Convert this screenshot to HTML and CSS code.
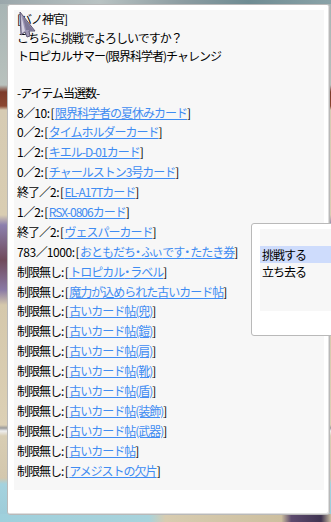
FILE: index.html
```html
<!DOCTYPE html>
<html lang="ja">
<head>
  <meta charset="UTF-8" />
  <meta name="viewport" content="width=device-width, initial-scale=1.0" />
  <title>バノ神官</title>
  <link rel="stylesheet" href="styles.css">
</head>
<body>
  <div class="scene">
    <div class="dialog">
      <div class="panel">
        <p class="line">[バノ神官]</p>
        <p class="line">こちらに挑戦でよろしいですか？</p>
        <p class="line">トロピカルサマー(限界科学者)チャレンジ</p>
        <p class="line">&nbsp;</p>
        <p class="line">-アイテム当選数-</p>
        <p class="line item"><span class="num">8</span>／<span class="num">10</span><span class="sep">:[</span><a href="#">限界科学者の夏休みカード</a>]</p>
        <p class="line item"><span class="num">0</span>／<span class="num">2</span><span class="sep">:[</span><a href="#">タイムホルダーカード</a>]</p>
        <p class="line item"><span class="num">1</span>／<span class="num">2</span><span class="sep">:[</span><a href="#">キエル-D-01カード</a>]</p>
        <p class="line item"><span class="num">0</span>／<span class="num">2</span><span class="sep">:[</span><a href="#">チャールストン3号カード</a>]</p>
        <p class="line item">終了／<span class="num">2</span><span class="sep">:[</span><a href="#">EL-A17Tカード</a>]</p>
        <p class="line item"><span class="num">1</span>／<span class="num">2</span><span class="sep">:[</span><a href="#">RSX-0806カード</a>]</p>
        <p class="line item">終了／<span class="num">2</span><span class="sep">:[</span><a href="#">ヴェスパーカード</a>]</p>
        <p class="line item"><span class="num">783</span>／<span class="num">1000</span><span class="sep">:[</span><a href="#">おともだち<span class="dot">・</span>ふ<span class="small">ぃ</span>です<span class="dot">・</span>たたき券</a>]</p>
        <p class="line item">制限無し<span class="sep">:[</span><a href="#">トロピカル<span class="dot">・</span>ラベル</a>]</p>
        <p class="line item">制限無し<span class="sep">:[</span><a href="#">魔力が込められた古いカード帖</a>]</p>
        <p class="line item">制限無し<span class="sep">:[</span><a href="#">古いカード帖(兜)</a>]</p>
        <p class="line item">制限無し<span class="sep">:[</span><a href="#">古いカード帖(鎧)</a>]</p>
        <p class="line item">制限無し<span class="sep">:[</span><a href="#">古いカード帖(肩)</a>]</p>
        <p class="line item">制限無し<span class="sep">:[</span><a href="#">古いカード帖(靴)</a>]</p>
        <p class="line item">制限無し<span class="sep">:[</span><a href="#">古いカード帖(盾)</a>]</p>
        <p class="line item">制限無し<span class="sep">:[</span><a href="#">古いカード帖(装飾)</a>]</p>
        <p class="line item">制限無し<span class="sep">:[</span><a href="#">古いカード帖(武器)</a>]</p>
        <p class="line item">制限無し<span class="sep">:[</span><a href="#">古いカード帖</a>]</p>
        <p class="line item">制限無し<span class="sep">:[</span><a href="#">アメジストの欠片</a>]</p>
      </div>
    </div>

    <div class="menu">
      <div class="menu-panel">
        <div class="option selected">挑戦する</div>
        <div class="option">立ち去る</div>
      </div>
    </div>

    <svg class="cursor" width="20" height="27" viewBox="0 0 20 27">
      <polygon points="2,1 17,20 11,20 12,25 9,26 7,21 3,24" fill="#9c96b4" stroke="#5e5874" stroke-width="1" stroke-linejoin="round" />
      <polygon points="3,3 7,20 4,22" fill="#d6d2e2" />
      <polygon points="5,6 15,19 10,19 8,19" fill="#7d7796" />
    </svg>
  </div>
</body>
</html>
```

FILE: styles.css
```css
* {
  margin: 0;
  padding: 0;
  box-sizing: border-box;
}

body {
  width: 331px;
  height: 522px;
  overflow: hidden;
  font-family: "Noto Sans CJK JP", "Noto Sans", sans-serif;
  font-size: 12px;
  color: #000;
  background:
    linear-gradient(to right, #9aa7ab, #b9c3c3 30%, #8d9da2 55%, #6f8c93 75%, #8aa3a8) top / 100% 4px no-repeat,
    linear-gradient(to right, #9fd0dc 0, #a8d3dc 45%, #d8ccb0 50%, #cdbf9f 85%, #5d4a6e 88%, #3f3350 97%, #cbbfa3 100%) bottom / 100% 8px no-repeat,
    linear-gradient(to bottom, #a7b4b4 0, #b8c1bd 85px, #7b3a2a 92px, #8a4630 106px, #d6cbb3 110px, #d9cdb2 215px, #8c80ae 225px, #6f4a5a 260px, #8a7aa5 290px, #d5c8ab 305px, #dcd0b5 425px, #9b9b9b 428px, #efefef 431px, #d8cdb3 436px, #d3c7ad 478px, #a4d2de 484px, #9ccbd8 100%);
}

.scene {
  position: relative;
  height: 100%;
  padding: 4px 0 0 7px;
}

.dialog {
  width: 323px;
  height: 511px;
  background: #fff;
  border: 1px solid #b9b9b9;
  border-radius: 3px;
  box-shadow: inset -1px -1px 0 #dedede;
  padding: 5px 5px 0 6px;
}

.panel {
  height: 480px;
  background: #f7f7f7;
  padding: 0 0 0 3px;
}

.line {
  height: 18.5px;
  line-height: 18.5px;
  letter-spacing: -1px;
  white-space: nowrap;
}

.line.item {
  height: 19.9px;
  line-height: 19.9px;
}

.line .num {
  letter-spacing: -0.4px;
}

.line .sep {
  letter-spacing: 0.4px;
}

.line .dot {
  font-feature-settings: "halt";
  letter-spacing: 0;
}

.line .small {
  font-feature-settings: "palt";
  letter-spacing: 0;
}

.line a {
  color: #3f8cf2;
  text-decoration: underline;
  text-underline-offset: 1px;
}

.menu {
  position: absolute;
  left: 251px;
  top: 223px;
  width: 90px;
  height: 113px;
  background: #fff;
  border: 1px solid #b9b9b9;
  border-radius: 3px;
  padding: 5px 0 0 8px;
}

.menu-panel {
  height: 82px;
  background: #f7f7f7;
  padding-top: 17px;
}

.option {
  height: 17px;
  line-height: 17px;
  padding-left: 2px;
  letter-spacing: -1px;
}

.option.selected {
  background: #cedcfc;
}

.cursor {
  position: absolute;
  left: 18px;
  top: 11px;
}
```
